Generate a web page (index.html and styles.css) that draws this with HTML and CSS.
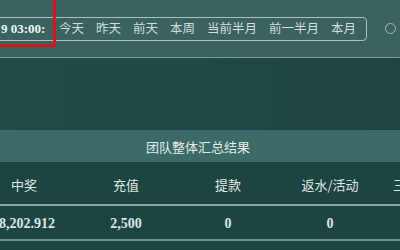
FILE: index.html
```html
<!DOCTYPE html>
<html lang="zh">
<head>
<meta charset="utf-8">
<link rel="stylesheet" href="styles.css">
</head>
<body>
<div class="page">
  <div class="toolbar">
    <div class="range">
      <span class="date">9 03:00:</span>
      <span class="opt">今天</span>
      <span class="opt">昨天</span>
      <span class="opt">前天</span>
      <span class="opt">本周</span>
      <span class="opt">当前半月</span>
      <span class="opt">前一半月</span>
      <span class="opt">本月</span>
    </div>
    <span class="radio"></span>
    <div class="mark"></div>
  </div>
  <div class="gap"></div>
  <div class="summary">
    <div class="title">团队整体汇总结果</div>
    <div class="row head">
      <div class="cell">中奖</div>
      <div class="cell">充值</div>
      <div class="cell">提款</div>
      <div class="cell">返水/活动</div>
      <div class="cell">三方游戏盈亏</div>
    </div>
    <div class="row data">
      <div class="cell num first">8,202.912</div>
      <div class="cell num">2,500</div>
      <div class="cell num">0</div>
      <div class="cell num">0</div>
      <div class="cell num"></div>
    </div>
  </div>
</div>
</body>
</html>
```

FILE: styles.css
```css
* { box-sizing: border-box; }
html, body { margin: 0; padding: 0; }
body {
  width: 400px;
  height: 250px;
  overflow: hidden;
  background: #1c4440;
  font-family: "Noto Sans CJK SC", "Noto Sans", sans-serif;
  color: #d7e1df;
}
.page { width: 400px; height: 250px; overflow: hidden; }
.toolbar {
  position: relative;
  height: 58px;
  background: #3a625f;
  border-bottom: 1px solid #7c9a96;
  display: flex;
  align-items: center;
}
.range {
  margin-left: -8px;
  height: 24px;
  width: 375px;
  border: 1px solid #a9c0bc;
  border-radius: 4px;
  display: flex;
  align-items: center;
  padding-left: 8px;
  gap: 12px;
  font-size: 12.5px;
  color: #d3dedc;
  white-space: nowrap;
}
.date {
  font-family: "Liberation Serif", serif;
  font-weight: bold;
  font-size: 13px;
  color: #f1f5f4;
  width: 46px;
}
.opt { line-height: 1; }
.radio {
  margin-left: 18px;
  width: 11px;
  height: 11px;
  border: 1.5px solid #a6b8b5;
  border-radius: 50%;
}
.mark {
  position: absolute;
  left: -4px;
  top: -4px;
  width: 60px;
  height: 51px;
  border: 3px solid #d8141c;
}
.gap {
  height: 72px;
  background: linear-gradient(90deg, #214b47 0%, #1f4542 100%);
}
.summary { width: 400px; }
.title {
  height: 32px;
  background: #3c6a66;
  display: flex;
  align-items: center;
  justify-content: center;
  font-size: 13px;
  color: #e4ecea;
  padding-right: 4px;
}
.row {
  display: flex;
  margin-left: -27px;
  width: 520px;
  background: #1c4541;
}
.head {
  height: 44px;
  border-bottom: 2px solid #86a7a2;
  align-items: center;
  font-size: 13px;
  color: #e0e8e6;
  padding-top: 2px;
}
.data {
  height: 35px;
  border-bottom: 2px solid #6f928d;
  align-items: center;
  padding-top: 2px;
}
.cell {
  width: 102px;
  text-align: center;
  flex: none;
  white-space: nowrap;
}
.num {
  font-family: "Liberation Serif", serif;
  font-weight: bold;
  font-size: 14px;
  color: #dde6e4;
}
.first { padding-left: 6px; }
```
